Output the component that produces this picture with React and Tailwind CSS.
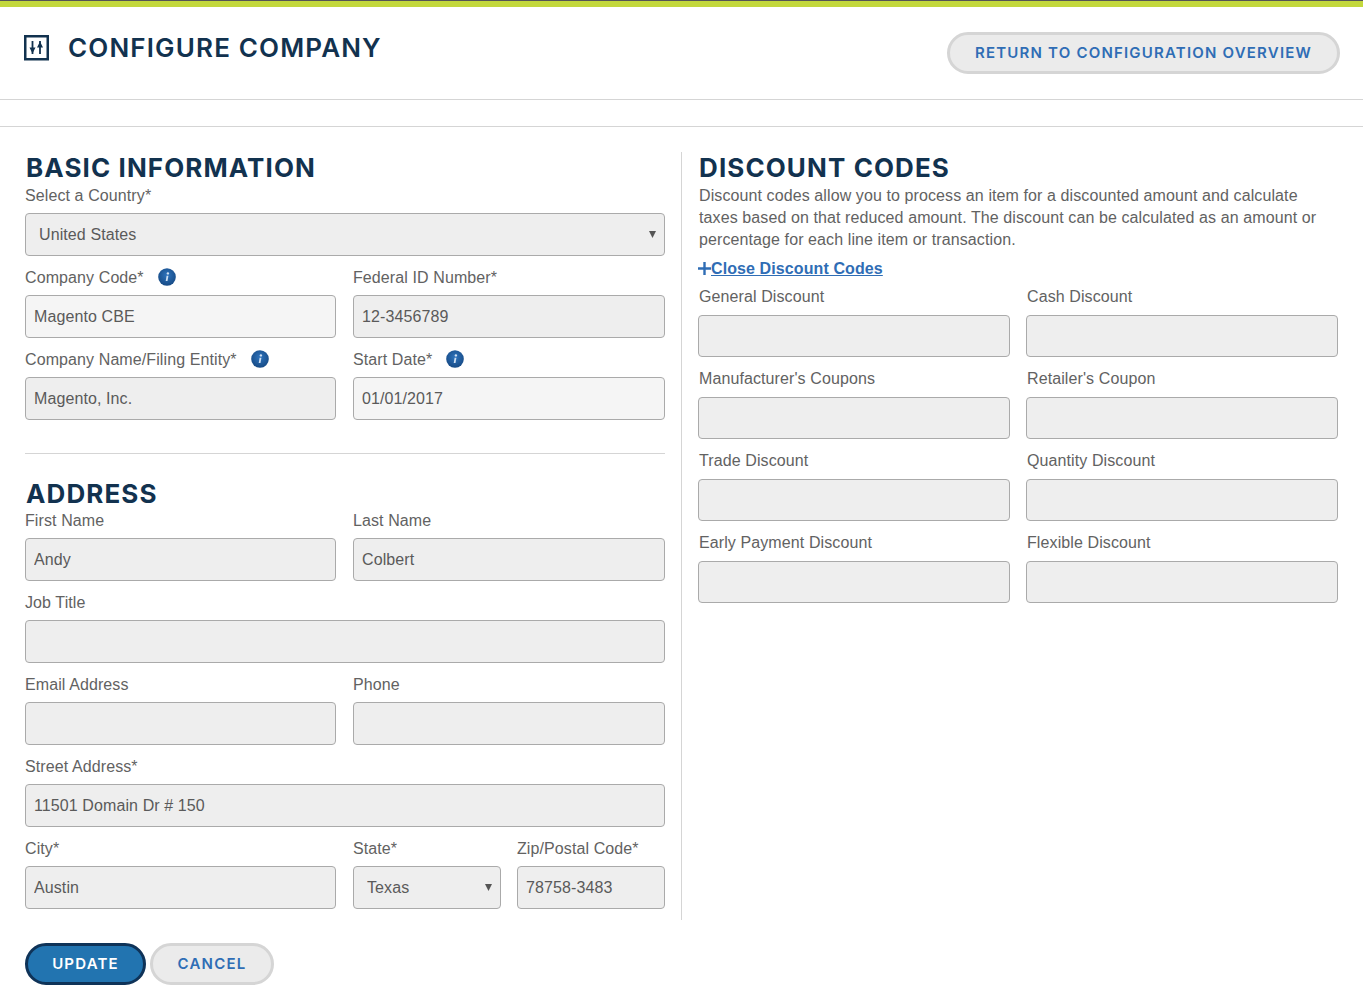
const headingFont = "font-['Inter',sans-serif]";

function InfoIcon() {
  return (
    <svg width="18" height="18" viewBox="0 0 18 18" className="shrink-0 mb-[2px]">
      <defs>
        <radialGradient id="infoFill" cx="50%" cy="40%" r="60%">
          <stop offset="0%" stopColor="#2f74bd" />
          <stop offset="100%" stopColor="#164a85" />
        </radialGradient>
      </defs>
      <circle cx="9" cy="9" r="8.8" fill="url(#infoFill)" />
      <circle cx="9.9" cy="5.4" r="1.2" fill="#cfe0f2" />
      <path d="M8.6 7.8 L10.4 7.8 L9.5 13 L7.7 13 Z" fill="#cfe0f2" />
    </svg>
  );
}

function ConfigIcon() {
  return (
    <svg width="26" height="26" viewBox="0 0 26 26" className="shrink-0">
      <rect x="1.25" y="1.25" width="22.5" height="23" fill="none" stroke="#12324f" strokeWidth="2.5" />
      <path d="M8.5 6v13M16 6v13" stroke="#12324f" strokeWidth="1.8" fill="none" />
      <path d="M5.5 12.5h6L8.5 18.5zM13 12.5h6L16 6.5z" fill="#12324f" />
    </svg>
  );
}

function Field({ label, value = '', info, light, className = '', right }) {
  return (
    <div className={className}>
      <div className={`flex items-center gap-[14px] h-[22px] ${right ? 'mb-[7px] pl-px' : 'mt-px mb-[6px]'} text-[16px] tracking-[0.1px] text-[#626262]`}>
        <label>{label}</label>
        {info && <InfoIcon />}
      </div>
      <input
        readOnly
        defaultValue={value}
        className={`block w-full ${right ? 'h-[42px]' : 'h-[43px]'} px-2 rounded-[4px] border border-[#aaaaaa] text-[16px] tracking-[0.1px] text-[#5a5a5a] outline-none ${
          light ? 'bg-[#f5f5f5]' : 'bg-[#eeeeee]'
        }`}
      />
    </div>
  );
}

function SelectField({ label, value, className = '' }) {
  return (
    <div className={className}>
      <label className="block h-[22px] mb-[7px] text-[16px] tracking-[0.1px] text-[#626262]">{label}</label>
      <div className="relative">
        <select
          defaultValue={value}
          className="block w-full h-[43px] pl-[13px] pr-6 appearance-none rounded-[4px] border border-[#aaaaaa] bg-[#eeeeee] text-[16px] tracking-[0.1px] text-[#5a5a5a] outline-none"
        >
          <option>{value}</option>
        </select>
        <svg width="7" height="7" viewBox="0 0 7 7" className="absolute right-[9px] top-[18px] pointer-events-none">
          <path d="M0 0h7L3.5 7z" fill="#555555" />
        </svg>
      </div>
    </div>
  );
}

function Heading({ children, className = '' }) {
  return (
    <h2 className={`${headingFont} pl-px text-[26px] leading-[32px] font-bold tracking-[1.1px] text-[#12324f] ${className}`}>
      {children}
    </h2>
  );
}

function PillButton({ children, primary, className = '' }) {
  return (
    <button
      className={`${headingFont} h-[42px] rounded-full border-[3px] text-[15px] font-semibold tracking-[1.2px] ${
        primary ? 'bg-[#2274b0] border-[#0f3358] text-white' : 'bg-[#ebebeb] border-[#d5d5d5] text-[#2f6db5]'
      } ${className}`}
    >
      {children}
    </button>
  );
}

const discountFields = [
  'General Discount',
  'Cash Discount',
  "Manufacturer's Coupons",
  "Retailer's Coupon",
  'Trade Discount',
  'Quantity Discount',
  'Early Payment Discount',
  'Flexible Discount',
];

export default function App() {
  return (
    <div className="min-h-[1000px] bg-white font-['Liberation_Sans',sans-serif] overflow-hidden">
      <div className="h-[7px] bg-[#c3d83c] border-t border-[#555555]" />

      <header className="flex items-start justify-between h-[93px] border-b border-[#d5d5d5] pl-6 pr-[23px]">
        <div className="flex items-center gap-[18px] mt-[28px]">
          <ConfigIcon />
          <h1 className={`${headingFont} text-[26px] leading-[26px] font-semibold tracking-[1.15px] text-[#12324f]`}>
            CONFIGURE COMPANY
          </h1>
        </div>
        <PillButton className="w-[393px] mt-[25px]">RETURN TO CONFIGURATION OVERVIEW</PillButton>
      </header>

      <div className="h-[27px] border-b border-[#d5d5d5]" />

      <main className="flex pl-[25px] pr-[25px] pt-[25px]">
        <section className="w-[640px] shrink-0 pb-[11px]">
          <Heading>BASIC INFORMATION</Heading>
          <SelectField label="Select a Country*" value="United States" />
          <div className="grid grid-cols-[311px_312px] gap-x-[17px] gap-y-[10px] mt-[10px]">
            <Field label="Company Code*" value="Magento CBE" info light />
            <Field label="Federal ID Number*" value="12-3456789" />
            <Field label="Company Name/Filing Entity*" value="Magento, Inc." info />
            <Field label="Start Date*" value="01/01/2017" info light />
          </div>

          <hr className="mt-[33px] mb-[24px] border-[#d5d5d5]" />

          <Heading className="mb-[-1px]">ADDRESS</Heading>
          <div className="grid grid-cols-[311px_312px] gap-x-[17px] gap-y-[10px]">
            <Field label="First Name" value="Andy" />
            <Field label="Last Name" value="Colbert" />
            <Field label="Job Title" className="col-span-2" />
            <Field label="Email Address" />
            <Field label="Phone" />
            <Field label="Street Address*" value="11501 Domain Dr # 150" className="col-span-2" />
            <Field label="City*" value="Austin" />
            <div className="grid grid-cols-[148px_148px] gap-x-4">
              <SelectField label="State*" value="Texas" />
              <Field label="Zip/Postal Code*" value="78758-3483" />
            </div>
          </div>
        </section>

        <div className="w-px bg-[#d5d5d5] ml-4 mr-4 shrink-0" />

        <section className="flex-1">
          <Heading>DISCOUNT CODES</Heading>
          <p className="mt-px pl-px pr-[10px] text-[16px] leading-[22px] tracking-[0.1px] text-[#626262]">
            Discount codes allow you to process an item for a discounted amount and calculate
            taxes based on that reduced amount. The discount can be calculated as an amount or
            percentage for each line item or transaction.
          </p>
          <a className="flex items-center h-[22px] mt-[7px] text-[16px] font-bold tracking-[0.1px] text-[#2f6db5]">
            <svg width="13" height="13" viewBox="0 0 13 13" className="shrink-0 mb-[2px]">
              <path d="M6.5 0v13M0 6.5h13" stroke="#2f6db5" strokeWidth="2.4" />
            </svg>
            <span className="underline">Close Discount Codes</span>
          </a>
          <div className="grid grid-cols-[312px_312px] gap-x-[16px] gap-y-[11px] mt-[6px]">
            {discountFields.map((name) => (
              <Field key={name} label={name} right />
            ))}
          </div>
        </section>
      </main>

      <div className="flex gap-1 pl-[25px] mt-[23px]">
        <PillButton primary className="w-[121px]">UPDATE</PillButton>
        <PillButton className="w-[124px]">CANCEL</PillButton>
      </div>
    </div>
  );
}
